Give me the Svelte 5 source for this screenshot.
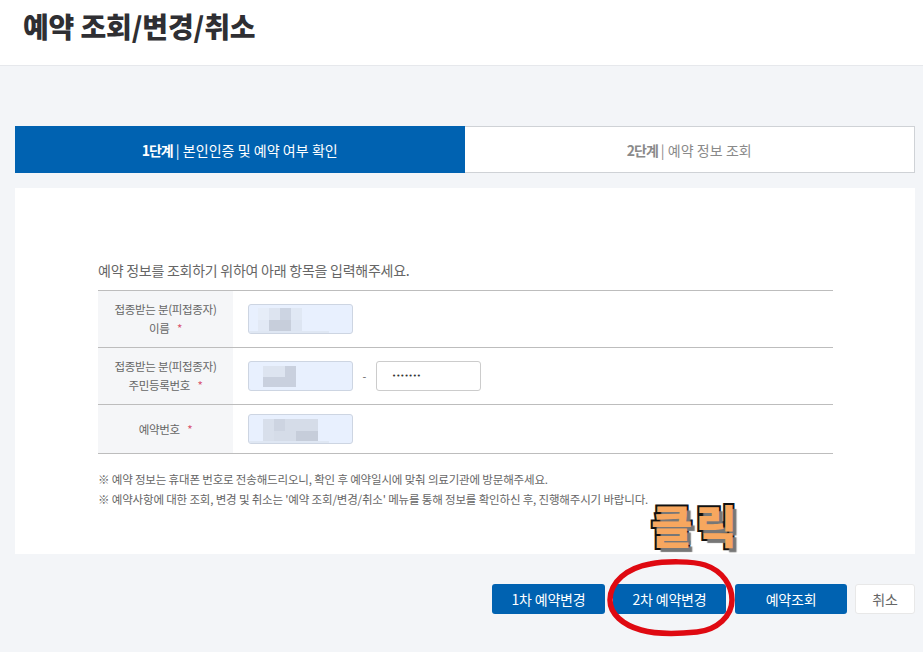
<script>
  // blurred-out values in the inputs, one colour per mosaic cell
  const nameCells = ['#e6edf8', '#dde4f0', '#ccd4e2', '#e0e8f4', '#e2e9f5', '#c7cedb', '#c7cedb', '#dde5f2'];
  const idCells = ['#dde4f0', '#dde4f0', '#c9d0de', '#c9d0de', '#c9d0de', '#c9d0de'];
  const bookCells = ['#d8dfeb', '#cdd4e1', '#d5dce8', '#d5dce8', '#d5dce8', '#d8dfeb', '#d5dce8', '#d5dce8', '#c6cdda', '#c6cdda'];
</script>

<div class="page">
  <header class="top">
    <h1>예약 조회/변경/취소</h1>
  </header>

  <main class="main">
    <div class="steps">
      <div class="step on"><b>1단계</b> | 본인인증 및 예약 여부 확인</div>
      <div class="step"><b>2단계</b> | 예약 정보 조회</div>
    </div>

    <section class="card">
      <p class="intro">예약 정보를 조회하기 위하여 아래 항목을 입력해주세요.</p>

      <div class="form">
        <div class="row r1">
          <div class="label">접종받는 분(피접종자)<br />이름 <i>*</i></div>
          <div class="field">
            <div class="input filled">
              <div class="mosaic m-name">
                {#each nameCells as c}<span style="background:{c}"></span>{/each}
              </div>
              <span class="smear"></span>
            </div>
          </div>
        </div>
        <div class="row r2">
          <div class="label">접종받는 분(피접종자)<br />주민등록번호 <i>*</i></div>
          <div class="field">
            <div class="input filled">
              <div class="mosaic m-id">
                {#each idCells as c}<span style="background:{c}"></span>{/each}
              </div>
            </div>
            <span class="dash">-</span>
            <div class="input secret">•••••••</div>
          </div>
        </div>
        <div class="row r3">
          <div class="label">예약번호 <i>*</i></div>
          <div class="field">
            <div class="input filled">
              <div class="mosaic m-book">
                {#each bookCells as c}<span style="background:{c}"></span>{/each}
              </div>
              <span class="smear"></span>
            </div>
          </div>
        </div>
      </div>

      <div class="notes">
        <p>※ 예약 정보는 휴대폰 번호로 전송해드리오니, 확인 후 예약일시에 맞춰 의료기관에 방문해주세요.</p>
        <p>※ 예약사항에 대한 조회, 변경 및 취소는 '예약 조회/변경/취소' 메뉴를 통해 정보를 확인하신 후, 진행해주시기 바랍니다.</p>
      </div>
    </section>

    <div class="actions">
      <button class="btn blue w1">1차 예약변경</button>
      <button class="btn blue w2">2차 예약변경</button>
      <button class="btn blue w3">예약조회</button>
      <button class="btn plain">취소</button>
    </div>
  </main>

  <!-- annotation drawn on top of the screenshot -->
  <div class="click-note">클릭</div>
  <svg class="ring" width="136" height="80" viewBox="0 0 136 80">
    <path d="M45 6 C60 3 88 3 100 7 C118 13 127 28 127 42 C127 58 112 72 92 74 C72 76 50 76 36 72 C18 67 5 56 5 42 C5 24 22 10 45 6 Z" fill="none" stroke="#df0a12" stroke-width="5.5" />
  </svg>
</div>

<style>
  :global(body) {
    margin: 0;
    background: #f3f5f8;
  }
  .page {
    position: relative;
    width: 923px;
    height: 652px;
    overflow: hidden;
    font-family: "Noto Sans CJK KR", "Noto Sans", sans-serif;
    color: #555;
    background: #f3f5f8;
  }
  .top {
    height: 65px;
    background: #fff;
    border-bottom: 1px solid #e6e8ec;
    padding-left: 23px;
  }
  h1 {
    margin: 0;
    padding-top: 6px;
    font-size: 28px;
    line-height: 40px;
    font-weight: 900;
    letter-spacing: -0.15px;
    color: #2f2f33;
  }
  .main {
    padding: 60px 8px 0 15px;
  }
  .steps {
    display: flex;
    height: 47px;
  }
  .step {
    flex: 1;
    display: flex;
    align-items: center;
    justify-content: center;
    gap: 3px;
    box-sizing: border-box;
    background: #fff;
    border: 1px solid #cfd2d6;
    border-left: 0;
    font-size: 14px;
    letter-spacing: 0.05px;
    color: #8a8a8a;
  }
  .step b {
    font-weight: 700;
    letter-spacing: -1px;
  }
  .step.on {
    background: #0062b1;
    border: 0;
    color: #fff;
  }
  .card {
    margin-top: 15px;
    height: 366px;
    box-sizing: border-box;
    background: #fff;
    padding: 72px 82px 0 83px;
  }
  .intro {
    margin: 0 0 10px;
    font-size: 14px;
    line-height: 20px;
    letter-spacing: -0.25px;
    color: #666;
  }
  .form {
    border-top: 1px solid #bdbdbd;
  }
  .row {
    display: flex;
    border-bottom: 1px solid #bdbdbd;
    box-sizing: border-box;
    background: linear-gradient(to right, #f5f6f8 135px, #fff 135px);
  }
  .r1, .r2 { height: 57px; }
  .r3 { height: 49px; }
  .label {
    width: 135px;
    flex: none;
    align-self: center;
    text-align: center;
    font-size: 11.5px;
    line-height: 19px;
    letter-spacing: -0.3px;
    color: #666;
  }
  .label i {
    font-style: normal;
    color: #d9536f;
    margin-left: 5px;
  }
  .field {
    display: flex;
    align-items: center;
    padding-left: 15px;
  }
  .input {
    width: 105px;
    height: 30px;
    box-sizing: border-box;
    border: 1px solid #ccc;
    border-radius: 3px;
    background: #fff;
  }
  .filled {
    background: #e8f0fe;
    border-color: #cdd5e2;
    overflow: hidden;
    position: relative;
  }
  .smear {
    position: absolute;
    left: 0;
    bottom: 0;
    width: 80px;
    height: 2px;
    background: #dfe7f3;
  }
  .secret {
    display: flex;
    align-items: center;
    padding-left: 15px;
    font-size: 7px;
    color: #333;
    font-family: "DejaVu Sans", sans-serif;
  }
  .dash {
    width: 23px;
    text-align: center;
    font-size: 11px;
    color: #666;
  }
  .mosaic {
    display: grid;
    grid-template-columns: repeat(3, 11px);
    margin-left: 14px;
    margin-top: 4px;
  }
  .m-name {
    grid-template-columns: repeat(4, 11px);
    grid-auto-rows: 11.5px;
    margin-left: 9px;
    margin-top: 3px;
  }
  .m-id {
    grid-auto-rows: 10.5px;
  }
  .m-book {
    grid-template-columns: repeat(5, 11px);
    grid-auto-rows: 11.5px;
  }
  .notes {
    margin-top: 15px;
  }
  .notes p {
    margin: 0;
    font-size: 11.5px;
    line-height: 20px;
    letter-spacing: -0.17px;
    color: #666;
  }
  .actions {
    display: flex;
    justify-content: flex-end;
    margin-top: 30px;
  }
  .btn {
    height: 30px;
    padding: 0;
    border-radius: 3px;
    font-family: inherit;
    font-size: 14px;
    letter-spacing: -0.2px;
  }
  .blue {
    background: #0062b1;
    border: 0;
    color: #fff;
  }
  .w1 { width: 113px; margin-right: 8px; }
  .w2 { width: 113px; margin-right: 9px; }
  .w3 { width: 112px; margin-right: 8px; }
  .plain {
    width: 60px;
    background: #fff;
    border: 1px solid #e8e8e8;
    color: #666;
  }
  .click-note {
    position: absolute;
    left: 651px;
    top: 495px;
    font-size: 45px;
    line-height: 60px;
    font-weight: 900;
    letter-spacing: 3px;
    color: #f7a75f;
    -webkit-text-stroke: 4px #111;
    paint-order: stroke fill;
    text-shadow: 4px 4px 1px #777;
  }
  .ring {
    position: absolute;
    left: 605px;
    top: 558px;
  }
</style>
